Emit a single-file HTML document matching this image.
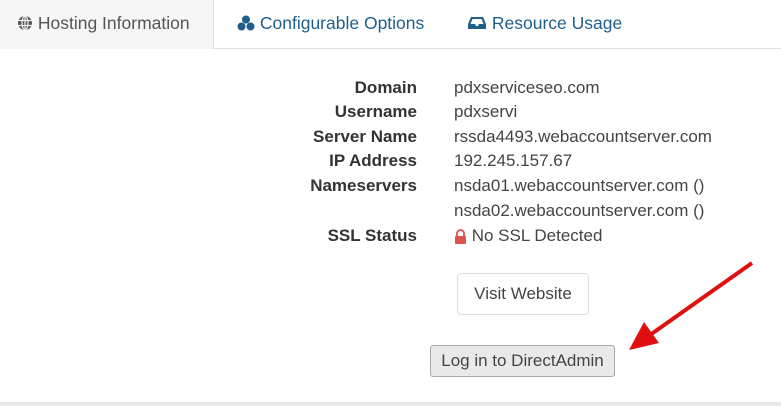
<!DOCTYPE html>
<html><head><style>
body{margin:0;width:781px;height:406px;background:#fff;font-family:"Liberation Sans",sans-serif;position:relative;overflow:hidden}
.t0{position:absolute;left:0;top:0;width:213px;height:49px;background:#f6f6f6}
.tr{position:absolute;left:213px;top:-1px;width:570px;height:49px;border-left:1px solid #e2e2e2;border-bottom:1px solid #e2e2e2;background:#fff}
.tab{position:absolute;top:13px;font-size:17.5px;white-space:nowrap}
.row{position:absolute;font-size:17px;color:#333;white-space:nowrap}
.l{right:364px;font-weight:bold}
.v{left:454px;color:#444}
.btn{position:absolute;font-size:17px;color:#444;display:flex;align-items:center;justify-content:center;box-sizing:border-box}
</style></head><body>
<div class="t0"></div><div class="tr"></div>
<div class="tab" style="left:17px;color:#555">
<svg width="16" height="16" viewBox="0 0 16 16" style="vertical-align:-2px"><circle cx="8" cy="8" r="7" fill="#555"/><g stroke="#f6f6f6" stroke-width="1.2" fill="none"><ellipse cx="8" cy="8" rx="3" ry="7"/><line x1="1" y1="5.5" x2="15" y2="5.5"/><line x1="1" y1="10.5" x2="15" y2="10.5"/><line x1="8" y1="1" x2="8" y2="15"/></g></svg> Hosting Information</div>
<div class="tab" style="left:237px;color:#1f5f8b">
<svg width="18" height="16" viewBox="0 0 18 16" style="vertical-align:-2px"><circle cx="9" cy="4.5" r="4" fill="#1f5f8b"/><circle cx="4.5" cy="11.5" r="4" fill="#1f5f8b"/><circle cx="13.5" cy="11.5" r="4" fill="#1f5f8b"/></svg> Configurable Options</div>
<div class="tab" style="left:467px;color:#1f5f8b">
<svg width="20" height="14" viewBox="0 0 20 14" style="vertical-align:-1px"><path d="M1 8 L4 1 H16 L19 8 V13 H1 Z" fill="#1f5f8b"/><path d="M3.5 8 L5.5 3 H14.5 L16.5 8 H12 L11 10 H9 L8 8 Z" fill="#fff"/></svg> Resource Usage</div>

<div class="row l" style="top:78px">Domain</div><div class="row v" style="top:78px">pdxserviceseo.com</div>
<div class="row l" style="top:102px">Username</div><div class="row v" style="top:102px">pdxservi</div>
<div class="row l" style="top:127px">Server Name</div><div class="row v" style="top:127px">rssda4493.webaccountserver.com</div>
<div class="row l" style="top:151px">IP Address</div><div class="row v" style="top:151px">192.245.157.67</div>
<div class="row l" style="top:176px">Nameservers</div><div class="row v" style="top:176px">nsda01.webaccountserver.com ()</div>
<div class="row v" style="top:201px">nsda02.webaccountserver.com ()</div>
<div class="row l" style="top:226px">SSL Status</div><div class="row v" style="top:226px"><svg width="13" height="15" viewBox="0 0 13 15" style="vertical-align:-3px"><path d="M3 7 V4.5 a3.5 3.5 0 0 1 7 0 V7" stroke="#d9534f" stroke-width="1.8" fill="none"/><rect x="1" y="7" width="11" height="8" rx="1" fill="#d9534f"/></svg> No SSL Detected</div>

<div class="btn" style="left:457px;top:273px;width:132px;height:42px;border:1px solid #ddd;border-radius:4px;background:#fff">Visit Website</div>
<div class="btn" style="left:430px;top:345px;width:185px;height:32px;border:1px solid #aaa;border-radius:3px;background:#e9e9e9">Log in to DirectAdmin</div>

<svg style="position:absolute;left:0;top:0" width="781" height="406"><line x1="752" y1="263" x2="650" y2="335" stroke="#e01010" stroke-width="4"/><polygon points="629,350 644,322 659,343" fill="#e01010"/></svg>
<div style="position:absolute;left:0;top:402px;width:781px;height:4px;background:#e8e8e8"></div>
</body></html>
